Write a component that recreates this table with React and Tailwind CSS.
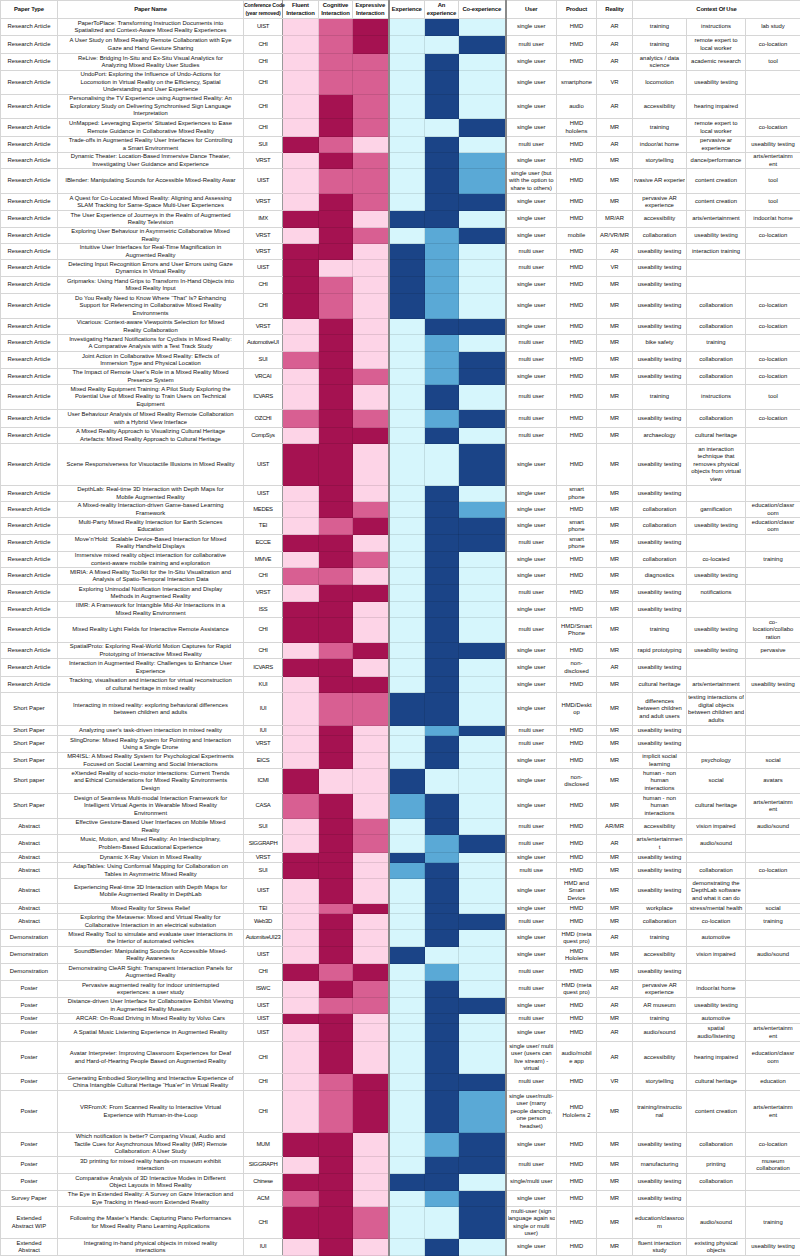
import React from "react";

// pink levels for interaction columns, blue levels for experience columns
const PINK = { 1: "bg-[#fdd4e7]", 2: "bg-[#d85f92]", 3: "bg-[#a51251]" };
const BLUE = { 1: "bg-[#d6f6fc]", 2: "bg-[#5aa9d6]", 3: "bg-[#1b4487]" };

// [type, name, conf, colours, user, product, reality, ctx1, ctx2, ctx3, height]
const rows = [
  ["Research Article", "PaperToPlace: Transforming Instruction Documents into|Spatialized and Context-Aware Mixed Reality Experiences", "UIST", "123131", "single user", "HMD", "AR", "training", "instructions", "lab study", 17],
  ["Research Article", "A User Study on Mixed Reality Remote Collaboration with Eye|Gaze and Hand Gesture Sharing", "CHI", "123113", "multi user", "HMD", "AR", "training", "remote expert to|local worker", "co-location", 18],
  ["Research Article", "ReLive: Bridging In-Situ and Ex-Situ Visual Analytics for|Analyzing Mixed Reality User Studies", "CHI", "122131", "single user", "HMD", "AR", "analytics / data|science", "academic research", "tool", 17],
  ["Research Article", "UndoPort: Exploring the Influence of Undo-Actions for|Locomotion in Virtual Reality on the Efficiency, Spatial|Understanding and User Experience", "CHI", "122131", "single user", "smartphone", "VR", "locomotion", "useability testing", "", 24],
  ["Research Article", "Personalising the TV Experience using Augmented Reality: An|Exploratory Study on Delivering Synchronised Sign Language|Interpretation", "CHI", "132131", "single user", "audio", "AR", "accessibility", "hearing impaired", "", 24],
  ["Research Article", "UnMapped: Leveraging Experts' Situated Experiences to Ease|Remote Guidance in Collaborative Mixed Reality", "CHI", "132113", "single user", "HMD|hololens", "MR", "training", "remote expert to|local worker", "co-location", 18],
  ["Research Article", "Trade-offs in Augmented Reality User Interfaces for Controlling|a Smart Environment", "SUI", "321131", "multi user", "HMD", "AR", "indoor/at home", "pervasive ar|experience", "useability testing", 16],
  ["Research Article", "Dynamic Theater: Location-Based Immersive Dance Theater,|Investigating User Guidance and Experience", "VRST", "132132", "single user", "HMD", "MR", "storytelling", "dance/performance", "arts/entertainm|ent", 16],
  ["Research Article", "lBlender: Manipulating Sounds for Accessible Mixed-Reality Awar", "UIST", "122132", "single user (but|with the option to|share to others)", "HMD", "MR", "rvasive AR experien", "content creation", "tool", 25],
  ["Research Article", "A Quest for Co-Located Mixed Reality: Aligning and Assessing|SLAM Tracking for Same-Space Multi-User Experiences", "VRST", "132133", "single user", "HMD", "MR", "pervasive AR|experience", "content creation", "tool", 17],
  ["Research Article", "The User Experience of Journeys in the Realm of Augmented|Reality Television", "IMX", "331331", "single user", "HMD", "MR/AR", "accessibility", "arts/entertainment", "indoor/at home", 17],
  ["Research Article", "Exploring User Behaviour in Asymmetric Collaborative Mixed|Reality", "VRST", "132123", "single user", "mobile", "AR/VR/MR", "collaboration", "useability testing", "co-location", 16],
  ["Research Article", "Intuitive User Interfaces for Real-Time Magnification in|Augmented Reality", "VRST", "331321", "multi user", "HMD", "AR", "useability testing", "interaction training", "", 16],
  ["Research Article", "Detecting Input Recognition Errors and User Errors using Gaze|Dynamics in Virtual Reality", "UIST", "311321", "multi user", "HMD", "VR", "useability testing", "", "", 17],
  ["Research Article", "Gripmarks: Using Hand Grips to Transform In-Hand Objects into|Mixed Reality Input", "CHI", "321321", "single user", "HMD", "MR", "useability testing", "", "", 17],
  ["Research Article", "Do You Really Need to Know Where \u201CThat\u201D Is? Enhancing|Support for Referencing in Collaborative Mixed Reality|Environments", "CHI", "321321", "single user", "HMD", "MR", "useability testing", "collaboration", "co-location", 25],
  ["Research Article", "Vicarious: Context-aware Viewpoints Selection for Mixed|Reality Collaboration", "VRST", "131133", "single user", "HMD", "MR", "useability testing", "collaboration", "co-location", 16],
  ["Research Article", "Investigating Hazard Notifications for Cyclists in Mixed Reality:|A Comparative Analysis with a Test Track Study", "AutomotiveUI", "131121", "multi user", "HMD", "MR", "bike safety", "training", "", 17],
  ["Research Article", "Joint Action in Collaborative Mixed Reality: Effects of|Immersion Type and Physical Location", "SUI", "231123", "multi user", "HMD", "MR", "useability testing", "collaboration", "co-location", 17],
  ["Research Article", "The Impact of Remote User\u2019s Role in a Mixed Reality Mixed|Presence System", "VRCAI", "132123", "single user", "HMD", "MR", "useability testing", "collaboration", "co-location", 16],
  ["Research Article", "Mixed Reality Equipment Training: A Pilot Study Exploring the|Potential Use of Mixed Reality to Train Users on Technical|Equipment", "ICVARS", "131131", "multi user", "HMD", "MR", "training", "instructions", "tool", 25],
  ["Research Article", "User Behaviour Analysis of Mixed Reality Remote Collaboration|with a Hybrid View Interface", "OZCHI", "232123", "multi user", "HMD", "MR", "useability testing", "collaboration", "co-location", 18],
  ["Research Article", "A Mixed Reality Approach to Visualizing Cultural Heritage|Artefacts: Mixed Reality Approach to Cultural Heritage", "CompSys", "133131", "multi user", "HMD", "MR", "archaeology", "cultural heritage", "", 16],
  ["Research Article", "Scene Responsiveness for Visuotactile Illusions in Mixed Reality", "UIST", "331113", "single user", "HMD", "MR", "useability testing", "an interaction|technique that|removes physical|objects from virtual|view", "", 42],
  ["Research Article", "DepthLab: Real-time 3D Interaction with Depth Maps for|Mobile Augmented Reality", "UIST", "131131", "single user", "smart|phone", "MR", "useability testing", "", "", 16],
  ["Research Article", "A Mixed-reality Interaction-driven Game-based Learning|Framework", "MEDES", "132132", "single user", "HMD", "MR", "collaboration", "gamification", "education/classr|oom", 16],
  ["Research Article", "Multi-Party Mixed Reality Interaction for Earth Sciences|Education", "TEI", "123133", "single user", "smart|phone", "MR", "collaboration", "useability testing", "education/classr|oom", 17],
  ["Research Article", "Move\u2019n\u2019Hold: Scalable Device-Based Interaction for Mixed|Reality Handheld Displays", "ECCE", "331133", "multi user", "smart|phone", "MR", "useability testing", "", "", 17],
  ["Research Article", "Immersive mixed reality object interaction for collaborative|context-aware mobile training and exploration", "MMVE", "132131", "single user", "HMD", "MR", "collaboration", "co-located", "training", 16],
  ["Research Article", "MIRIA: A Mixed Reality Toolkit for the In-Situ Visualization and|Analysis of Spatio-Temporal Interaction Data", "CHI", "221131", "single user", "HMD", "MR", "diagnostics", "useability testing", "", 17],
  ["Research Article", "Exploring Unimodal Notification Interaction and Display|Methods in Augmented Reality", "VRST", "133131", "multi user", "HMD", "MR", "useability testing", "notifications", "", 17],
  ["Research Article", "IIMR: A Framework for Intangible Mid-Air Interactions in a|Mixed Reality Environment", "ISS", "331131", "single user", "HMD", "MR", "useability testing", "", "", 16],
  ["Research Article", "Mixed Reality Light Fields for Interactive Remote Assistance", "CHI", "331131", "multi user", "HMD/Smart|Phone", "MR", "training", "useability testing", "co-|location/collabo|ration", 25],
  ["Research Article", "SpatialProto: Exploring Real-World Motion Captures for Rapid|Prototyping of Interactive Mixed Reality", "CHI", "123133", "single user", "HMD", "MR", "rapid prototyping", "useability testing", "pervasive", 16],
  ["Research Article", "Interaction in Augmented Reality: Challenges to Enhance User|Experience", "ICVARS", "331131", "single user", "non-|disclosed", "AR", "useability testing", "", "", 18],
  ["Research Article", "Tracking, visualisation and interaction for virtual reconstruction|of cultural heritage in mixed reality", "KUI", "133131", "single user", "HMD", "MR", "cultural heritage", "arts/entertainment", "useability testing", 16],
  ["Short Paper", "Interacting in mixed reality: exploring behavioral differences|between children and adults", "IUI", "122331", "single user", "HMD/Deskt|op", "MR", "differences|between children|and adult users", "testing interactions of|digital objects|between children and|adults", "", 33],
  ["Short Paper", "Analyzing user's task-driven interaction in mixed reality", "IUI", "131123", "multi user", "HMD", "MR", "useability testing", "", "", 10],
  ["Short Paper", "SlingDrone: Mixed Reality System for Pointing and Interaction|Using a Single Drone", "VRST", "131131", "multi user", "HMD", "MR", "useability testing", "", "", 17],
  ["Short Paper", "MR4ISL: A Mixed Reality System for Psychological Experiments|Focused on Social Learning and Social Interactions", "EICS", "131131", "single user", "HMD", "MR", "implicit social|learning", "psychology", "social", 16],
  ["Short paper", "eXtended Reality of socio-motor interactions: Current Trends|and Ethical Considerations for Mixed Reality Environments|Design", "ICMI", "311311", "single user", "non-|disclosed", "MR", "human - non|human|interactions", "social", "avatars", 25],
  ["Short Paper", "Design of Seamless Multi-modal Interaction Framework for|Intelligent Virtual Agents in Wearable Mixed Reality|Environment", "CASA", "231231", "single user", "HMD", "MR", "human - non|human|interactions", "cultural heritage", "arts/entertainm|ent", 25],
  ["Abstract", "Effective Gesture-Based User Interfaces on Mobile Mixed|Reality", "SUI", "132131", "multi user", "HMD", "AR/MR", "accessibility", "vision impaired", "audio/sound", 16],
  ["Abstract", "Music, Motion, and Mixed Reality: An Interdisciplinary,|Problem-Based Educational Experience", "SIGGRAPH", "132123", "multi user", "HMD", "AR", "arts/entertainmen|t", "audio/sound", "", 18],
  ["Abstract", "Dynamic X-Ray Vision in Mixed Reality", "VRST", "331321", "single user", "HMD", "MR", "useability testing", "", "", 10],
  ["Abstract", "AdapTables: Using Conformal Mapping for Collaboration on|Tables in Asymmetric Mixed Reality", "SUI", "331231", "multi use", "HMD", "MR", "useability testing", "collaboration", "co-location", 16],
  ["Abstract", "Experiencing Real-time 3D Interaction with Depth Maps for|Mobile Augmented Reality in DepthLab", "UIST", "131131", "single user", "HMD and|Smart|Device", "MR", "useability testing", "demonstrating the|DepthLab software|and what it can do", "", 25],
  ["Abstract", "Mixed Reality for Stress Relief", "TEI", "123131", "single user", "HMD", "MR", "workplace", "stress/mental health", "social", 10],
  ["Abstract", "Exploring the Metaverse: Mixed and Virtual Reality for|Collaborative Interaction in an electrical substation", "Web3D", "131133", "multi user", "HMD", "MR", "collaboration", "co-location", "training", 16],
  ["Demonstration", "Mixed Reality Tool to simulate and evaluate user interactions in|the Interior of automated vehicles", "AutomitveUI23", "131131", "single user", "HMD (meta|quest pro)", "AR", "training", "automotive", "", 17],
  ["Demonstration", "SoundBlender: Manipulating Sounds for Accessible Mixed-|Reality Awareness", "UIST", "131311", "single user", "HMD|Hololens", "MR", "accessibility", "vision impaired", "audio/sound", 17],
  ["Demonstration", "Demonstrating CleAR Sight: Transparent Interaction Panels for|Augmented Reality", "CHI", "323121", "multi user", "HMD", "MR", "useability testing", "", "", 17],
  ["Poster", "Pervasive augmented reality for indoor uninterrupted|experiences: a user study", "ISWC", "132131", "multi user", "HMD (meta|quest pro)", "AR", "pervasive AR|experience", "indoor/at home", "", 17],
  ["Poster", "Distance-driven User Interface for Collaborative Exhibit Viewing|in Augmented Reality Museum", "UIST", "122133", "single user", "HMD", "AR", "AR museum", "useability testing", "", 16],
  ["Poster", "ARCAR: On-Road Driving in Mixed Reality by Volvo Cars", "UIST", "331131", "multi user", "HMD", "MR", "training", "automotive", "", 10],
  ["Poster", "A Spatial Music Listening Experience in Augmented Reality", "UIST", "131131", "single user", "HMD", "AR", "audio/sound", "spatial|audio/listening", "arts/entertainm|ent", 18],
  ["Poster", "Avatar Interpreter: Improving Classroom Experiences for Deaf|and Hard-of-Hearing People Based on Augmented Reality", "CHI", "131131", "single user/ multi|user (users can|live stream) -|virtual", "audio/mobil|e app", "AR", "accessibility", "hearing impaired", "education/classr|oom", 32],
  ["Poster", "Generating Embodied Storytelling and Interactive Experience of|China Intangible Cultural Heritage \u201CHua\u2019er\u201D in Virtual Reality", "CHI", "123133", "multi user", "HMD", "VR", "storytelling", "cultural heritage", "education", 17],
  ["Poster", "VRFromX: From Scanned Reality to Interactive Virtual|Experience with Human-in-the-Loop", "CHI", "123132", "single user/multi-|user (many|people dancing,|one person|headset)", "HMD|Hololens 2", "MR", "training/instructio|nal", "content creation", "arts/entertainm|ent", 42],
  ["Poster", "Which notification is better? Comparing Visual, Audio and|Tactile Cues for Asynchronous Mixed Reality (MR) Remote|Collaboration: A User Study", "MUM", "331123", "single user", "HMD", "MR", "useability testing", "collaboration", "co-location", 24],
  ["Poster", "3D printing for mixed reality hands-on museum exhibit|interaction", "SIGGRAPH", "131133", "multi user", "HMD", "MR", "manufacturing", "printing", "museum|collaboration", 17],
  ["Poster", "Comparative Analysis of 3D Interactive Modes in Different|Object Layouts in Mixed Reality", "Chinese", "331331", "single/multi user", "HMD", "MR", "useability testing", "collaboration", "", 17],
  ["Survey Paper", "The Eye in Extended Reality: A Survey on Gaze Interaction and|Eye Tracking in Head-worn Extended Reality", "ACM", "231123", "single user", "HMD", "MR", "useability testing", "", "", 16],
  ["Extended|Abstract WIP", "Following the Master\u2019s Hands: Capturing Piano Performances|for Mixed Reality Piano Learning Applications", "CHI", "332113", "multi-user (sign|language again so|single or multi|user)", "HMD", "MR", "education/classroo|m", "audio/sound", "training", 32],
  ["Extended|Abstract", "Integrating in-hand physical objects in mixed reality|interactions", "IUI", "131131", "single user", "HMD", "MR", "fluent interaction|study", "existing physical|objects", "useability testing", 17],
];

const Lines = ({ text }) =>
  text.split("|").map((line, i) => <div key={i}>{line}</div>);

const Cell = ({ text, className = "" }) => (
  <td className={`border border-[#d6d6d6] px-[1px] py-0 text-center align-middle ${className}`}>
    <div className="overflow-hidden whitespace-nowrap">
      <Lines text={text} />
    </div>
  </td>
);

const ColourCell = ({ cls, className = "" }) => (
  <td className={`border border-black/10 p-0 ${cls} ${className}`} />
);

const Th = ({ children, className = "", ...rest }) => (
  <th
    className={`border border-[#d6d6d6] px-0 py-0 text-center align-middle font-bold whitespace-nowrap tracking-[-0.15px] ${className}`}
    {...rest}
  >
    {children}
  </th>
);

export default function App() {
  return (
    <div className="w-[800px] bg-white font-['Liberation_Sans',Arial,sans-serif] text-[5.9px] leading-[7.5px] text-[#111]">
      <table className="w-[800px] table-fixed border-collapse">
        <colgroup>
          <col className="w-[57px]" />
          <col className="w-[186px]" />
          <col className="w-[39px]" />
          <col className="w-[36px]" />
          <col className="w-[34px]" />
          <col className="w-[36px]" />
          <col className="w-[36px]" />
          <col className="w-[34px]" />
          <col className="w-[47px]" />
          <col className="w-[51px]" />
          <col className="w-[40px]" />
          <col className="w-[36px]" />
          <col className="w-[54px]" />
          <col className="w-[59px]" />
          <col className="w-[55px]" />
        </colgroup>
        <thead>
          <tr className="h-[18px]">
            <Th>Paper Type</Th>
            <Th>Paper Name</Th>
            <Th className="border-r-[#9a9a9a] text-[5.2px] tracking-[-0.3px]">
              Conference Code
              <br />
              (year removed)
            </Th>
            <Th>
              Fluent
              <br />
              Interaction
            </Th>
            <Th>
              Cognitive
              <br />
              Interaction
            </Th>
            <Th className="border-r-2 border-r-[#8a8a8a]">
              Expressive
              <br />
              Interaction
            </Th>
            <Th>Experience</Th>
            <Th>
              An
              <br />
              experience
            </Th>
            <Th className="border-r-2 border-r-[#8a8a8a]">Co-experience</Th>
            <Th>User</Th>
            <Th className="border-[#4a4a4a]">Product</Th>
            <Th className="border-[#4a4a4a]">Reality</Th>
            <Th colSpan={3} className="border-[#4a4a4a]">
              Context Of Use
            </Th>
          </tr>
        </thead>
        <tbody>
          {rows.map((r, idx) => {
            const [type, name, conf, colours, user, product, reality, c1, c2, c3, h] = r;
            const lv = colours.split("");
            return (
              <tr key={idx} style={{ height: h }}>
                <Cell text={type} />
                <Cell text={name} />
                <Cell text={conf} className="border-r-[#9a9a9a] px-0 tracking-[-0.3px]" />
                <ColourCell cls={PINK[lv[0]]} />
                <ColourCell cls={PINK[lv[1]]} />
                <ColourCell cls={PINK[lv[2]]} className="border-r-2 border-r-[#8a8a8a]" />
                <ColourCell cls={BLUE[lv[3]]} />
                <ColourCell cls={BLUE[lv[4]]} />
                <ColourCell cls={BLUE[lv[5]]} className="border-r-2 border-r-[#8a8a8a]" />
                <Cell text={user} />
                <Cell text={product} />
                <Cell text={reality} />
                <Cell text={c1} />
                <Cell text={c2} />
                <Cell text={c3} />
              </tr>
            );
          })}
        </tbody>
      </table>
    </div>
  );
}
